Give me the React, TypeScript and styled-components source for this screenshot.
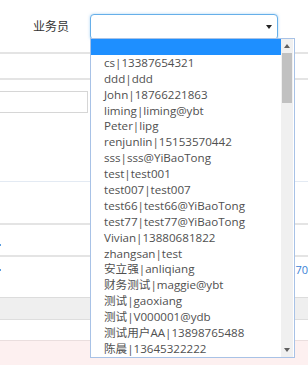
import React from "react";
import styled, { createGlobalStyle } from "styled-components";

const GlobalStyle = createGlobalStyle`
  html, body {
    margin: 0;
    padding: 0;
    background: #fff;
  }
  body {
    width: 308px;
    height: 365px;
    overflow: hidden;
    font-family: "Open Sans", "Noto Sans CJK SC", sans-serif;
  }
`;

const Page = styled.div`
  position: relative;
  width: 308px;
  height: 365px;
  overflow: hidden;
`;

const Header = styled.div`
  display: flex;
  align-items: center;
  height: 52px;
  padding-left: 33px;
  border-bottom: 2px solid #e4e4e4;
`;

const Label = styled.span`
  width: 57px;
  font-size: 12px;
  color: #333;
`;

const Select = styled.div`
  box-sizing: border-box;
  width: 188px;
  height: 26px;
  margin-top: 1px;
  display: flex;
  align-items: center;
  justify-content: flex-end;
  padding-right: 5px;
  border: 1px solid #66afe9;
  border-radius: 4px;
  box-shadow: 0 0 3px rgba(102, 175, 233, 0.55);
  background: #fff;
`;

const Row = styled.div<{ $h: number; $line?: string; $lineW?: number; $bg?: string }>`
  height: ${(p) => p.$h}px;
  border-bottom: ${(p) => p.$lineW ?? 2}px solid ${(p) => p.$line ?? "#e4e4e4"};
  background: ${(p) => p.$bg ?? "#fff"};
  display: flex;
  align-items: flex-start;
  justify-content: space-between;
`;

const InputBox = styled.div`
  box-sizing: border-box;
  margin-top: 11px;
  width: 88px;
  height: 22px;
  border: 1px solid #d6d6d6;
  border-left: none;
`;

const Tick = styled.span<{ $top: number }>`
  margin-top: ${(p) => p.$top}px;
  width: 1px;
  height: 2px;
  background: #5a9ee0;
`;

const Amount = styled.span<{ $top: number }>`
  margin-top: ${(p) => p.$top}px;
  font-size: 11px;
  line-height: 14px;
  color: #3b82d6;
  white-space: nowrap;
`;

const Pink = styled.div`
  height: 40px;
  background: #fdf0f0;
`;

const ListBox = styled.div`
  position: absolute;
  left: 90px;
  top: 38px;
  box-sizing: border-box;
  width: 205px;
  height: 320px;
  border: 1px solid #a8c2e6;
  background: #fff;
  display: flex;
`;

const Options = styled.div`
  width: 190px;
  display: flex;
  flex-direction: column;
`;

const Option = styled.div<{ $selected?: boolean }>`
  flex: none;
  height: 15.9px;
  line-height: 15.9px;
  padding-left: 13px;
  font-size: 11.6px;
  color: #505050;
  white-space: nowrap;
  overflow: hidden;
  background: ${(p) => (p.$selected ? "#1e8fff" : "transparent")};
`;

const ScrollBar = styled.div`
  width: 12px;
  margin-right: 1px;
  display: flex;
  flex-direction: column;
  background: #f0f0f0;
`;

const ScrollButton = styled.div`
  height: 14px;
  display: flex;
  align-items: center;
  justify-content: center;
`;

const Track = styled.div`
  flex: 1;
  padding: 0 1px;
`;

const Thumb = styled.div`
  height: 50px;
  background: #c1c1c1;
`;

const Arrow = ({ up, color }: { up?: boolean; color: string }) => (
  <svg width="6" height="4" viewBox="0 0 6 4">
    <polygon points={up ? "0,4 6,4 3,0" : "0,0 6,0 3,4"} fill={color} />
  </svg>
);

const options = [
  "",
  "cs|13387654321",
  "ddd|ddd",
  "John|18766221863",
  "liming|liming@ybt",
  "Peter|lipg",
  "renjunlin|15153570442",
  "sss|sss@YiBaoTong",
  "test|test001",
  "test007|test007",
  "test66|test66@YiBaoTong",
  "test77|test77@YiBaoTong",
  "Vivian|13880681822",
  "zhangsan|test",
  "安立强|anliqiang",
  "财务测试|maggie@ybt",
  "测试|gaoxiang",
  "测试|V000001@ydb",
  "测试用户AA|13898765488",
  "陈晨|13645322222",
];

export default function App() {
  return (
    <Page>
      <GlobalStyle />
      <Header>
        <Label>业务员</Label>
        <Select>
          <Arrow color="#222" />
        </Select>
      </Header>
      <Row $h={24} />
      <Row $h={101} $line="#e3eaf3" $lineW={1}>
        <InputBox />
      </Row>
      <Row $h={41} />
      <Row $h={30}>
        <Tick $top={19} />
      </Row>
      <Row $h={40} $line="#dcdcdc" $lineW={1}>
        <Tick $top={12} />
        <Amount $top={6}>.70</Amount>
      </Row>
      <Row $h={21} $bg="#efefef" $line="#dedede" $lineW={1} />
      <Row $h={20} $line="#eadede" $lineW={1} />
      <Pink />

      <ListBox>
        <Options>
          {options.map((o, i) => (
            <Option key={i} $selected={i === 0}>
              {o}
            </Option>
          ))}
        </Options>
        <ScrollBar>
          <ScrollButton>
            <Arrow up color="#606060" />
          </ScrollButton>
          <Track>
            <Thumb />
          </Track>
          <ScrollButton>
            <Arrow color="#606060" />
          </ScrollButton>
        </ScrollBar>
      </ListBox>
    </Page>
  );
}
